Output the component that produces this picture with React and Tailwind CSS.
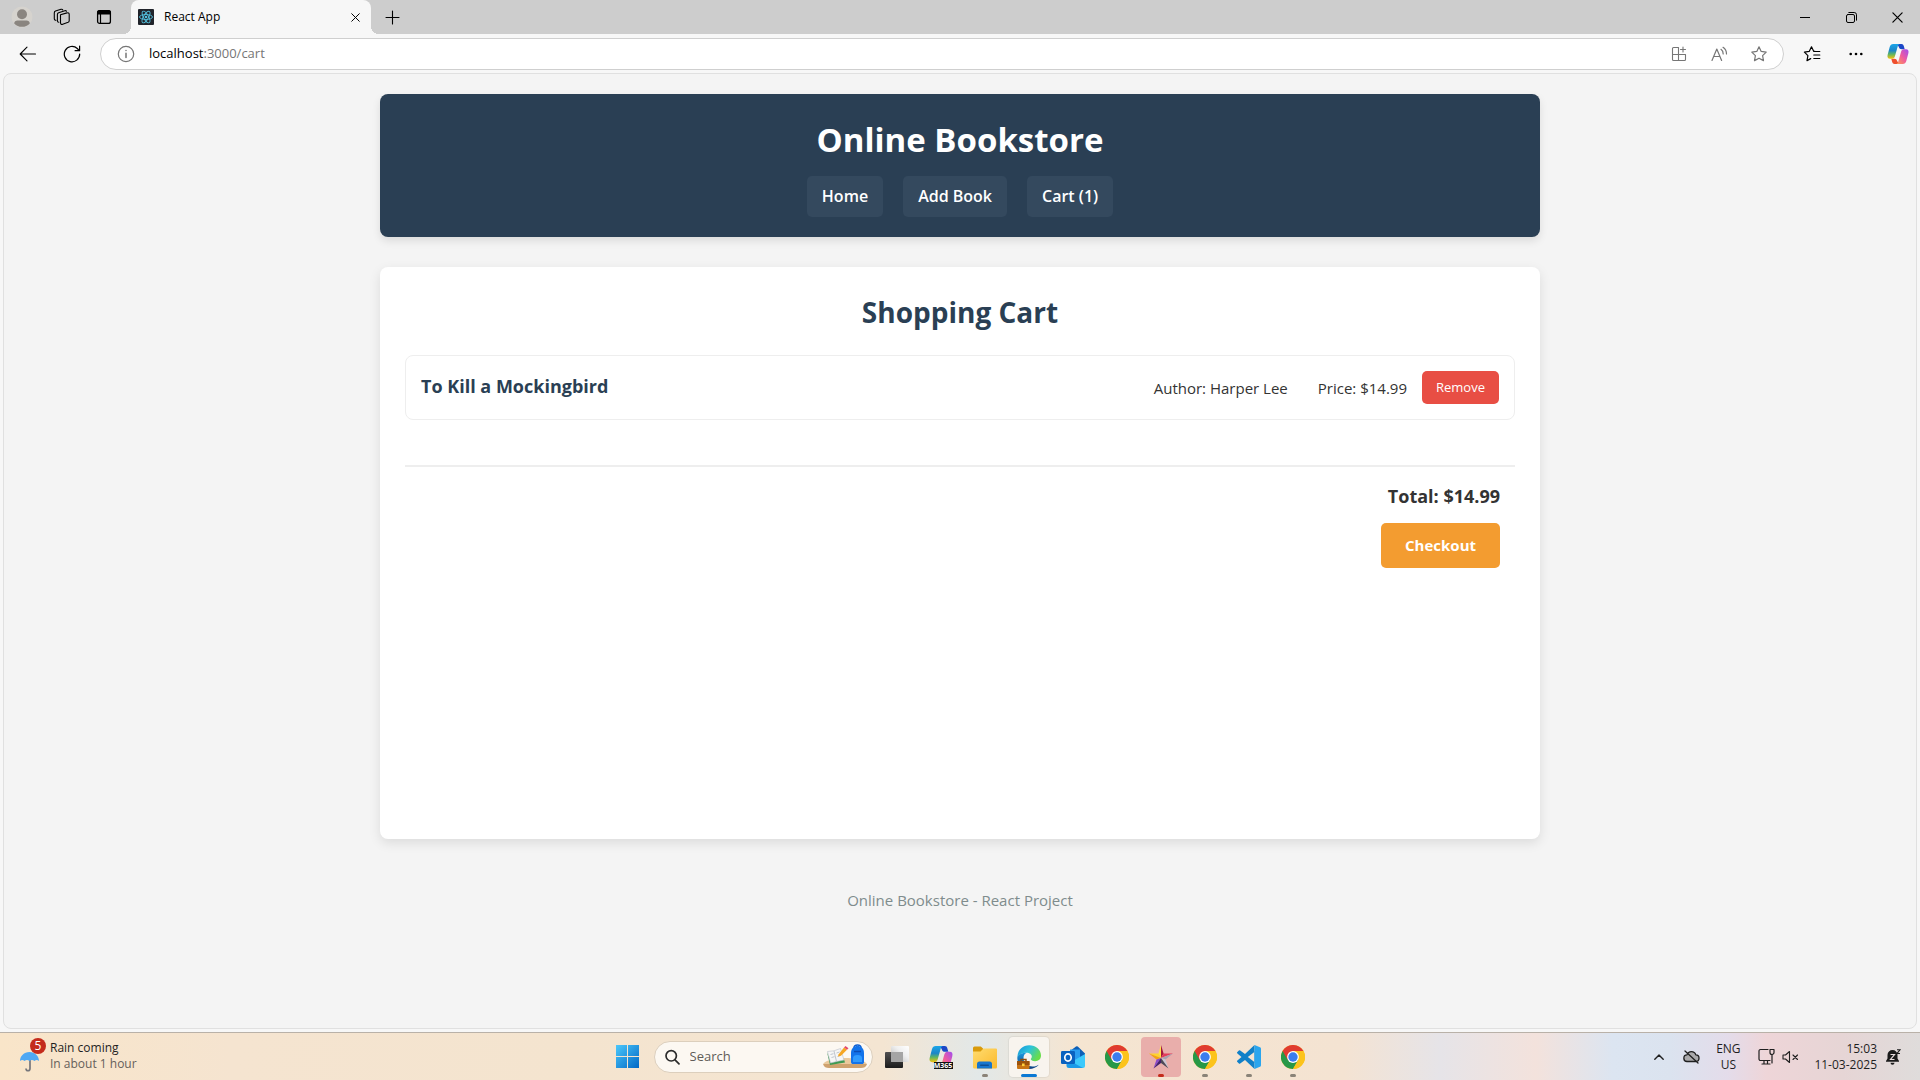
import React from "react";

const stroke = { fill: "none", stroke: "currentColor", strokeLinecap: "round", strokeLinejoin: "round" };

function Profile() {
  return (
    <svg width="22" height="22" viewBox="0 0 22 22">
      <circle cx="11" cy="11" r="10.5" fill="#d6d3ce" />
      <circle cx="11" cy="8.2" r="5" fill="#8a8580" />
      <path d="M3.2 17.4c0-2 1.6-3 3.2-3h9.200c1.600 0 3.200 1 3.200 3a10.500 10.500 0 0 1-15.600 0z" fill="#8a8580" />
    </svg>
  );
}

function Workspaces() {
  return (
    <svg width="18" height="18" viewBox="0 0 18 18" {...stroke} strokeWidth="1.100">
      <path d="M7.500 6.800l6.500-1.900c1.200-.4 2.200.3 2.200 1.500v6.300c0 .8-.4 1.300-1.100 1.600L9.700 16.300c-1.200.5-2.200-.3-2.200-1.500z" />
      <path d="M5.800 14.300c-.9 0-1.400-.6-1.400-1.500V6.500c0-.9.400-1.500 1.200-1.800l6.200-2c.8-.2 1.400 0 1.700.6" />
      <path d="M2.900 12.300C2 12.300 1.300 11.600 1.300 10.700V4.900c0-.9.400-1.500 1.200-1.800l5.500-1.800c.8-.2 1.500 0 1.800.6" />
    </svg>
  );
}

function TabActions() {
  return (
    <svg width="16" height="16" viewBox="0 0 16 16">
      <rect x="1.600" y="1.600" width="12.800" height="12.800" rx="2" {...stroke} strokeWidth="1.300" />
      <path d="M1 5.500V3.500A2.500 2.500 0 0 1 3.500 1h9A2.500 2.500 0 0 1 15 3.500v2z" fill="currentColor" />
      <path d="M4.500 5v9" stroke="currentColor" strokeWidth="1.200" />
    </svg>
  );
}

function ReactLogo() {
  return (
    <svg width="16" height="16" viewBox="0 0 16 16">
      <rect width="16" height="16" rx="1" fill="#20232a" />
      <g fill="none" stroke="#53c1de" strokeWidth=".9">
        <ellipse cx="8" cy="8" rx="6.500" ry="2.500" />
        <ellipse cx="8" cy="8" rx="6.500" ry="2.500" transform="rotate(60 8 8)" />
        <ellipse cx="8" cy="8" rx="6.500" ry="2.500" transform="rotate(120 8 8)" />
      </g>
      <circle cx="8" cy="8" r="1.300" fill="#53c1de" />
    </svg>
  );
}

function CloseX({ size }) {
  return (
    <svg width={size} height={size} viewBox="0 0 10 10" {...stroke} strokeWidth="1.100">
      <path d="M.8.8l8.400 8.400M9.200.8L.8 9.200" />
    </svg>
  );
}

function Copilot({ size }) {
  return (
    <svg width={size} height={size} viewBox="0 0 22 22">
      <defs>
        <linearGradient id="cpA" x1="0" y1="0" x2="0" y2="1">
          <stop offset="0" stopColor="#1aa5e8" />
          <stop offset=".45" stopColor="#1c86c8" />
          <stop offset=".7" stopColor="#5fb562" />
          <stop offset="1" stopColor="#f5c20b" />
        </linearGradient>
        <linearGradient id="cpB" x1="1" y1="0" x2="0" y2="1">
          <stop offset="0" stopColor="#a04df0" />
          <stop offset=".5" stopColor="#ef5aa0" />
          <stop offset="1" stopColor="#ffa04d" />
        </linearGradient>
      </defs>
      <path d="M10 1h4.500c1.300 0 1.900.8 2.300 2l.9 3.300h-3c-1.600 0-2.500-.8-3-2.500z" fill="#1b47c7" />
      <path d="M12 21H7.600c-1.400 0-2-.8-2.400-2l-.9-3.300h3c1.600 0 2.500.8 3 2.500z" fill="#ee4f2e" />
      <path d="M6.200 1h6.300c-1 .4-1.400 1.200-1.800 2.500L8 13c-.5 1.800-1.300 2.700-3 2.700H3c-2.300 0-3-1.800-2.300-4.200l2-7.500C3.300 2 4.400 1 6.200 1z" fill="url(#cpA)" />
      <path d="M15.800 21H9.500c1-.4 1.400-1.200 1.800-2.500L14 9c.5-1.800 1.300-2.700 3-2.700h2c2.300 0 3 1.800 2.300 4.200l-2 7.500c-.6 2-1.700 3-3.500 3z" fill="url(#cpB)" />
    </svg>
  );
}

function IconButton({ label, className, children }) {
  return (
    <button type="button" aria-label={label} className={`flex shrink-0 items-center justify-center ${className}`}>
      {children}
    </button>
  );
}

function TabStrip() {
  return (
    <div className="flex h-[34px] items-center bg-[#cdcdcd] text-black">
      <IconButton label="Profile" className="h-full w-[44px]"><Profile /></IconButton>
      <IconButton label="Workspaces" className="h-full w-[36px]"><Workspaces /></IconButton>
      <IconButton label="Tab actions" className="ml-1 h-full w-[40px]"><TabActions /></IconButton>
      <div className="relative ml-[7px] flex h-full w-[240px] items-center rounded-t-lg bg-[#f7f7f7] pl-[7px] pr-2 before:absolute before:bottom-0 before:-left-2 before:size-2 before:bg-[radial-gradient(circle_at_0_0,#cdcdcd_8px,#f7f7f7_8px)] after:absolute after:-right-2 after:bottom-0 after:size-2 after:bg-[radial-gradient(circle_at_100%_0,#cdcdcd_8px,#f7f7f7_8px)]">
        <ReactLogo />
        <span className="ml-[10px] flex-1 text-xs">React App</span>
        <IconButton label="Close tab" className="size-4"><CloseX size={9} /></IconButton>
      </div>
      <IconButton label="New tab" className="ml-[7px] size-7">
        <svg width="15" height="15" viewBox="0 0 15 15" {...stroke} strokeWidth="1.100"><path d="M7.500 1v13M1 7.500h13" /></svg>
      </IconButton>
      <div className="flex-1" />
      <IconButton label="Minimize" className="h-full w-[46px]">
        <svg width="10" height="10" viewBox="0 0 10 10"><path d="M0 5.500h10" stroke="currentColor" /></svg>
      </IconButton>
      <IconButton label="Restore" className="h-full w-[46px]">
        <svg width="11" height="11" viewBox="0 0 11 11" {...stroke}>
          <rect x=".5" y="2.500" width="8" height="8" rx="1.500" />
          <path d="M2.800.5h5.400a2.300 2.300 0 0 1 2.300 2.300v5.400" />
        </svg>
      </IconButton>
      <IconButton label="Close" className="h-full w-[46px]"><CloseX size={11} /></IconButton>
    </div>
  );
}

const STAR = "M9 1.800l2.200 4.600 5 .7-3.600 3.500.9 5L9 13.200l-4.500 2.400.9-5L1.800 7.100l5-.7z";

function Toolbar() {
  return (
    <div className="flex h-[39px] items-center bg-[#f7f7f7] pr-[2px] text-black">
      <IconButton label="Back" className="ml-2 h-8 w-[40px]">
        <svg width="18" height="16" viewBox="0 0 18 16" {...stroke} strokeWidth="1.100"><path d="M16.500 8H1.500M8 1.200L1.200 8 8 14.800" /></svg>
      </IconButton>
      <IconButton label="Refresh" className="ml-1 h-8 w-[40px]">
        <svg width="18" height="18" viewBox="0 0 18 18" {...stroke} strokeWidth="1.200"><path d="M16.700 9a7.700 7.700 0 1 1-2.400-5.500l2 2.100M16.600 1.200v4.500h-4.500" /></svg>
      </IconButton>
      <div className="ml-2 flex h-8 flex-1 items-center rounded-full border border-[#cfcfcf] bg-white pl-[16px] pr-[4px] text-[#767676]">
        <svg width="18" height="18" viewBox="0 0 18 18" {...stroke} strokeWidth="1.200">
          <circle cx="9" cy="9" r="7.700" /><path d="M9 8.200v4.300M9 5.400v.2" strokeWidth="1.500" />
        </svg>
        <a href="#cart" className="ml-[14px] flex-1 text-[13px]"><span className="text-black">localhost</span>:3000/cart</a>
        <IconButton label="App available" className="size-[40px]">
          <svg width="16" height="16" viewBox="0 0 16 16" {...stroke} strokeWidth="1.100">
            <path d="M7.500 1.500H2.500a1 1 0 0 0-1 1v11a1 1 0 0 0 1 1h11a1 1 0 0 0 1-1V8.500h-13M7.500 1.500v13M12 1v5M9.500 3.500h5" />
          </svg>
        </IconButton>
        <IconButton label="Read aloud" className="size-[40px]">
          <svg width="17" height="16" viewBox="0 0 17 16" {...stroke} strokeWidth="1.200">
            <path d="M1 14.500L5.800 3l4.800 11.500M2.700 10.500H9M10 3.300c1.500 1 2.200 2.600 2.200 4.700M12 1.300c2.300 1.500 3.500 3.800 3.500 6.700" />
          </svg>
        </IconButton>
        <IconButton label="Add to favorites" className="size-[40px]">
          <svg width="18" height="18" viewBox="0 0 18 18" {...stroke} strokeWidth="1.200"><path d={STAR} /></svg>
        </IconButton>
      </div>
      <IconButton label="Favorites" className="ml-2 h-8 w-[40px]">
        <svg width="18" height="18" viewBox="0 0 18 18" {...stroke} strokeWidth="1.200">
          <path d="M12 6.400h-1.200L8.500 1.800 6.200 6.400l-4.800.7 3.500 3.500-.9 5 3.700-2M11 6.500h5.800M10.800 10h6M10.800 13.500h6" />
        </svg>
      </IconButton>
      <IconButton label="More" className="ml-1 h-8 w-[40px]">
        <svg width="14" height="4" viewBox="0 0 14 4" fill="currentColor"><circle cx="1.700" cy="2" r="1.300" /><circle cx="7" cy="2" r="1.300" /><circle cx="12.300" cy="2" r="1.300" /></svg>
      </IconButton>
      <IconButton label="Copilot" className="ml-[2px] h-8 w-[40px]"><Copilot size={22} /></IconButton>
    </div>
  );
}

function NavLink({ children }) {
  return <a href="#nav" className="rounded-[5px] bg-[#34495e] px-[15px] py-2 text-base leading-[25px] font-semibold">{children}</a>;
}

function Bookstore() {
  return (
    <div className="mx-auto w-full max-w-[1200px] px-5 pt-5 text-[#333333]">
      <header className="rounded-lg bg-[#2a3f54] p-5 text-center text-white shadow-[0_4px_8px_rgba(0,0,0,0.1)]">
        <h1 className="text-[33px] leading-[52px] font-bold">Online Bookstore</h1>
        <nav className="mt-[10px] flex justify-center gap-5">
          <NavLink>Home</NavLink>
          <NavLink>Add Book</NavLink>
          <NavLink>Cart (1)</NavLink>
        </nav>
      </header>
      <main className="mt-[30px] min-h-[572px] rounded-lg bg-white p-[25px] shadow-[0_4px_12px_rgba(0,0,0,0.1)]">
        <h2 className="text-center text-[28px] leading-[41px] font-bold text-[#2a3f54]">Shopping Cart</h2>
        <div className="mt-[22px] flex items-center rounded-lg border border-[#eeeeee] p-[15px]">
          <h3 className="flex-1 pb-[3px] text-[18px] leading-[30px] font-bold text-[#2a3f54]">To Kill a Mockingbird</h3>
          <p className="pt-px text-[15px]">Author: Harper Lee</p>
          <p className="ml-[30px] pt-px text-[15px]">Price: $14.99</p>
          <button type="button" className="ml-[15px] h-[33px] rounded-[5px] bg-[#e84e44] px-[14px] text-[13px] text-white">Remove</button>
        </div>
        <div className="mt-[45px] flex flex-col items-end border-t-2 border-[#eeeeee] p-[15px]">
          <p className="text-[18px] leading-[28px] font-bold">Total: $14.99</p>
          <button type="button" className="mt-[13px] h-[45px] rounded-[5px] bg-[#f39c30] px-6 text-[15px] font-bold text-white">Checkout</button>
        </div>
      </main>
      <footer className="mt-[30px] p-5 text-center text-[15px] leading-[22px] text-[#7f8c8d]">Online Bookstore - React Project</footer>
    </div>
  );
}

function Chrome() {
  return (
    <svg width="24" height="24" viewBox="0 0 24 24">
      <circle cx="12" cy="12" r="12" fill="#fbc116" />
      <path d="M12 12L1.600 6A12 12 0 0 0 12 24l5.200-9z" fill="#279847" />
      <path d="M12 6h10.400A12 12 0 0 0 1.600 6l5.200 9z" fill="#e03b30" />
      <path d="M12 6h10.400a12 12 0 0 1-10.400 18l5.200-9z" fill="#fcc31c" />
      <circle cx="12" cy="12" r="5.900" fill="#fff" />
      <circle cx="12" cy="12" r="4.700" fill="#3b7ded" />
    </svg>
  );
}

function TaskView() {
  return (
    <svg width="24" height="24" viewBox="0 0 24 24">
      <defs>
        <linearGradient id="tvA" x1="0" y1="0" x2="0" y2="1"><stop offset="0" stopColor="#505050" /><stop offset="1" stopColor="#1c1c1c" /></linearGradient>
        <linearGradient id="tvB" x1="0" y1="1" x2="1" y2="0"><stop offset="0" stopColor="#b4b4b4" /><stop offset=".6" stopColor="#efefef" /><stop offset="1" stopColor="#fff" /></linearGradient>
      </defs>
      <rect x="0" y="7" width="18" height="16" rx="1" fill="url(#tvA)" />
      <rect x="6" y="1" width="18" height="16" rx="1" fill="url(#tvB)" />
      <path d="M6 7h12v10H7a1 1 0 0 1-1-1z" fill="#a5a5a5" />
    </svg>
  );
}

function M365() {
  return (
    <span className="relative flex size-6 items-start justify-center">
      <Copilot size={24} />
      <span className="absolute top-[17px] left-[5px] h-[7px] w-[19px] bg-[#111] text-center text-[7px] leading-[7px] font-bold text-white">M365</span>
    </span>
  );
}

function Explorer() {
  return (
    <svg width="24" height="24" viewBox="0 0 24 24">
      <defs><linearGradient id="exA" x1="0" y1="0" x2="1" y2="1"><stop offset="0" stopColor="#ffdc70" /><stop offset="1" stopColor="#fbb92c" /></linearGradient></defs>
      <path d="M0 3a1.500 1.500 0 0 1 1.500-1.500h6.300L10 3.500V9H0z" fill="#d99a0b" />
      <path d="M0 6.500h7.500l3-3H23a1 1 0 0 1 1 1V22a1.500 1.500 0 0 1-1.500 1.500h-21A1.500 1.500 0 0 1 0 22z" fill="url(#exA)" />
      <path d="M4 23.500V19a2.500 2.500 0 0 1 2.500-2.500h10A2.500 2.500 0 0 1 19 19v4.500z" fill="#1576cf" />
      <rect x="7" y="19.500" width="9" height="1.500" rx=".7" fill="#0c4f94" />
    </svg>
  );
}

function EdgeWork() {
  return (
    <svg width="24" height="24" viewBox="0 0 24 24">
      <defs>
        <linearGradient id="edA" x1="0" y1="0" x2="1" y2=".5"><stop offset="0" stopColor="#1791d8" /><stop offset=".5" stopColor="#2cc2dc" /><stop offset="1" stopColor="#68dd4b" /></linearGradient>
        <linearGradient id="edB" x1="0" y1="0" x2="0" y2="1"><stop offset="0" stopColor="#1c9ae0" /><stop offset="1" stopColor="#0e3f80" /></linearGradient>
      </defs>
      <path d="M.5 11C1 4.500 6 .3 12.200.3 19 .3 24 5 24 10.500c0 3.600-2.600 5.700-5.900 5.700-2.600 0-4.300-1-4.300-2.100 0-.8 1-1 1-2.700 0-2-2.200-3.700-5.300-3.700C5.600 7.700 2 9 .5 13z" fill="url(#edA)" />
      <path d="M.3 13C1 9.500 5 7.700 9.500 7.700c-2 1-3 2.800-3 5.300 0 5.500 4.500 8.500 9 8.500 3 0 5-1 6.300-1.800C19.800 22.300 16 24 12 24 5.500 24 .3 19.500.3 13z" fill="url(#edB)" />
      <path d="M4 16v-1.500h5V16" fill="none" stroke="#8c4a0b" strokeWidth="1.400" />
      <rect x="0" y="16" width="12.500" height="8" rx="1" fill="#c87413" />
      <path d="M0 16h12.500v4H0z" fill="#9c520b" />
      <rect x="5" y="18.500" width="2.600" height="2.600" fill="#ffcf3b" />
    </svg>
  );
}

function Outlook() {
  return (
    <svg width="24" height="24" viewBox="0 0 24 24">
      <path d="M5 9l10-7.500a1.500 1.500 0 0 1 1.800 0L24 8.500V14H5z" fill="#0d5fb6" />
      <path d="M9 4.500h10V16H9z" fill="#2a9df0" />
      <path d="M24 9v12a2 2 0 0 1-2 2H9l3-7z" fill="#3cc9fb" />
      <path d="M5.500 14L22 23H8a2.500 2.500 0 0 1-2.500-2.500z" fill="#1b9ae8" />
      <rect x="0" y="6" width="14" height="13" rx="1.300" fill="#0a62c0" />
      <ellipse cx="7" cy="12.500" rx="3.200" ry="3.600" fill="none" stroke="#fff" strokeWidth="1.700" />
    </svg>
  );
}

function StarApp() {
  return (
    <svg width="24" height="24" viewBox="0 0 24 24">
      <path d="M12 0l2.600 8.500L12 13z" fill="#a3173c" />
      <path d="M12 0L9.400 8.500 12 13z" fill="#ffe14a" />
      <path d="M0 8.500h9.400L12 13z" fill="#ffd52b" />
      <path d="M0 8.500l7.500 6L12 13z" fill="#f2a312" />
      <path d="M24 8.500h-9.400L12 13z" fill="#e33b5a" />
      <path d="M24 8.500l-7.500 6L12 13z" fill="#a99fb0" />
      <path d="M19.500 23.500l-3-9L12 13z" fill="#c9c6d2" />
      <path d="M19.500 23.500L12 18v-5z" fill="#4c4a58" />
      <path d="M4.500 23.500l3-9L12 13z" fill="#8b4bc8" />
      <path d="M4.500 23.500L12 18v-5z" fill="#43206f" />
    </svg>
  );
}

function VSCode() {
  return (
    <svg width="24" height="24" viewBox="0 0 24 24">
      <path fillRule="evenodd" d="M17.500 0L8 9.100 3.200 5.400a1 1 0 0 0-1.300.1L.4 6.900a1 1 0 0 0 0 1.500L4.500 12 .4 15.600a1 1 0 0 0 0 1.500l1.500 1.400a1 1 0 0 0 1.300.1L8 14.900 17.500 24zM18 6.600v10.800L10.800 12z" fill="#1180c8" />
      <path d="M17.500 0L23 2.300a1.500 1.500 0 0 1 1 1.400v16.600a1.500 1.500 0 0 1-1 1.400L17.500 24z" fill="#2aa5ee" />
    </svg>
  );
}

const APPS = [
  ["Task view", TaskView, "none"],
  ["Microsoft 365", M365, "none"],
  ["File Explorer", Explorer, "open"],
  ["Edge", EdgeWork, "active"],
  ["Outlook", Outlook, "none"],
  ["Chrome", Chrome, "none"],
  ["Star", StarApp, "alert"],
  ["Chrome work", Chrome, "open"],
  ["Visual Studio Code", VSCode, "open"],
  ["Chrome personal", Chrome, "open"],
];

const TILE = {
  none: "",
  open: "",
  active: "bg-[#f8f4ee] shadow-[0_0_1px_1px_rgba(0,0,0,0.06)]",
  alert: "bg-[#e9aeab]",
};
const MARK = {
  none: "",
  open: "w-[6px] bg-[#8a8378]",
  active: "w-4 bg-[#0a78d4]",
  alert: "w-[6px] bg-[#c42b1c]",
};

function Taskbar() {
  return (
    <div className="grid h-12 grid-cols-[1fr_auto_1fr] items-center border-t border-[#b9b1a8] bg-[linear-gradient(90deg,#f9e5c9_0%,#f5e4d0_12%,#f4e4cf_30%,#f4e5d2_46%,#e2e8e8_51%,#f5e5d1_56%,#f4e3d2_70%,#e6e4e8_75%,#f3e2dc_80%,#dce5f1_84%,#dbe3ef_87%,#e4dcea_90%,#eed5d8_92%,#e6d5d5_96%,#dfdcdb_100%)]">
      <button type="button" className="flex items-center pl-[18px] text-left text-xs leading-4">
        <span className="relative mr-2 block h-9 w-6">
          <svg width="24" height="36" viewBox="0 0 24 36">
            <path d="M12 19v10.500c0 3-4 3-4 0" fill="none" stroke="#77777c" strokeWidth="1.700" />
            <path d="M2 22c0-5 4-9 9.500-9s9.500 4 9.500 9c-1.600-1.200-3-1.200-4.500 0-1.700-1.200-3.300-1.200-5 0-1.700-1.200-3.300-1.200-5 0-1.500-1.200-3-1.200-4.500 0z" fill="#4fa8f4" />
          </svg>
          <span className="absolute -top-px left-3 size-4 rounded-full bg-[#c42b1c] text-center text-xs leading-4 text-white">5</span>
        </span>
        <span className="pb-[2px]">
          <span className="block text-[#1f1f1f]">Rain coming</span>
          <span className="block text-[#66605a]">In about 1 hour</span>
        </span>
      </button>
      <div className="flex items-center gap-1">
        <IconButton label="Start" className="size-10">
          <svg width="23" height="23" viewBox="0 0 23 23">
            <defs><linearGradient id="win" gradientUnits="userSpaceOnUse" x1="0" y1="0" x2="23" y2="23"><stop offset="0" stopColor="#4cc8fb" /><stop offset="1" stopColor="#0067c5" /></linearGradient></defs>
            <path d="M0 0h11v11H0zM12 0h11v11H12zM0 12h11v11H0zM12 12h11v11H12z" fill="url(#win)" />
          </svg>
        </IconButton>
        <label className="ml-[2px] flex h-8 w-[219px] items-center rounded-full border border-[#dccfbd] bg-[#fcf8f2] pl-[10px] pr-[5px]">
          <svg width="15" height="16" viewBox="0 0 15 16" fill="none" stroke="#2b2b2b" strokeWidth="1.700" strokeLinecap="round"><circle cx="6.200" cy="6.800" r="5.200" /><path d="M10 10.800l4 4" /></svg>
          <input type="text" aria-label="Search" placeholder="Search" className="ml-[10px] w-0 flex-1 bg-transparent text-[13px] outline-none placeholder:text-[#5f5c58]" />
          <svg width="44" height="26" viewBox="0 0 44 26">
            <path d="M0 20c4-5 14-6 22-6s18 1 22 6z" fill="#eac99c" />
            <path d="M0 20h44c-1 3-3 4-6 4H6c-3 0-5-1-6-4z" fill="#cfa26e" />
            <path d="M4 8l3 13 15-2.500-1-3L8 18z" fill="#3d9a52" />
            <path d="M4.500 7.500l6.500-.7 6.500-2.300 3.500 11.500-7.500 1.500L7.500 19z" fill="#f6f6f6" stroke="#b9bec8" strokeWidth=".6" />
            <path d="M7.500 10.500l3-.8M8.500 13.500l3-.8M13.500 9l3-1M14.500 12.500l3-1M11 7l2.500 10.500" stroke="#b9bec8" strokeWidth=".9" />
            <path d="M15.500 10.500L21 3.500l3 2.300-6 6-3 .7z" fill="#f6a623" />
            <path d="M21 3.500L22.500 2l3 2.300-1.500 1.500z" fill="#e5496b" />
            <path d="M31 4c0-4 7-4 7 0" fill="none" stroke="#0f5fd0" strokeWidth="1.500" />
            <path d="M28 9c0-4.500 3-7 6.500-7S41 4.500 41 9v9c0 1.500-1 2-2 2h-9c-1 0-2-.5-2-2z" fill="#1273ea" />
            <path d="M30 18v-4a4.500 3 0 0 1 9 0v4z" fill="#2f9bff" /><path d="M31 7.500h7" stroke="#0a4db5" strokeWidth="1.500" />
          </svg>
        </label>
        {APPS.map(([name, Icon, state]) => (
          <button key={name} type="button" aria-label={name} className={`relative flex size-10 items-center justify-center rounded ${TILE[state]}`}>
            <Icon />
            <span className={`absolute bottom-0 h-[3px] rounded-full ${MARK[state]}`} />
          </button>
        ))}
      </div>
      <div className="flex items-center justify-end pr-[19px] text-xs leading-4 text-[#1f1f1f]">
        <IconButton label="Hidden icons" className="h-10 w-8">
          <svg width="10" height="6" viewBox="0 0 10 6" {...stroke} strokeWidth="1.400"><path d="M.8 5.200L5 1l4.200 4.200" /></svg>
        </IconButton>
        <IconButton label="OneDrive" className="h-10 w-8">
          <svg width="17" height="14" viewBox="0 0 17 14" {...stroke} strokeWidth="1.300">
            <path d="M4.300 11.500a3.300 3.300 0 0 1-.3-6.600 4.600 4.600 0 0 1 8.800 0 3.300 3.300 0 0 1-.2 6.600z" fill="#aaa9ab" /><path d="M2 1l13 12" />
          </svg>
        </IconButton>
        <button type="button" className="ml-[3px] w-9 text-center">ENG<br />US</button>
        <button type="button" aria-label="Network and sound" className="ml-3 flex h-10 items-center gap-[7px]">
          <svg width="17" height="17" viewBox="0 0 17 17" {...stroke} strokeWidth="1.200">
            <path d="M10 1.500H2.500a1.500 1.500 0 0 0-1.500 1.500v8a1.500 1.500 0 0 0 1.500 1.500h9.500M6 12.500V16M9.500 12.500V16M4 16h8M14 6.500V15" /><path d="M12 1.500h4v3a2 2 0 0 1-4 0z" />
          </svg>
          <svg width="17" height="14" viewBox="0 0 17 14" {...stroke} strokeWidth="1.100">
            <path d="M1 5h2.500L7.500 1.500v11L3.500 9H1zM11 5l4.500 4.500M15.500 5L11 9.500" />
          </svg>
        </button>
        <button type="button" className="ml-[15px] text-right">15:03<br />11-03-2025</button>
        <IconButton label="Notifications" className="ml-2 h-10 w-4">
          <svg width="15" height="16" viewBox="0 0 15 16">
            <path d="M6.500 1a5 5 0 0 0-5 5v3.500L0 12v.7h13V12l-1.500-2.500V6a5 5 0 0 0-5-5zM4.500 13.700a2 2 0 0 0 4 0z" fill="#1b1b1b" />
            <path d="M4.500 5.500h4l-4 5h4" fill="none" stroke="#e6dcdc" strokeWidth="1.200" />
            <path d="M11 .8h3L11 4.500h3" fill="none" stroke="#1b1b1b" strokeWidth="1.100" />
          </svg>
        </IconButton>
      </div>
    </div>
  );
}

export default function App() {
  return (
    <div className="flex min-h-screen flex-col bg-[#f7f7f7] font-['Open_Sans','Noto_Sans',sans-serif]">
      <TabStrip />
      <Toolbar />
      <div className="mx-[3px] mb-[3px] flex-1 rounded-lg border border-[#e0e0e0] bg-[#f4f4f4]">
        <Bookstore />
      </div>
      <Taskbar />
    </div>
  );
}
